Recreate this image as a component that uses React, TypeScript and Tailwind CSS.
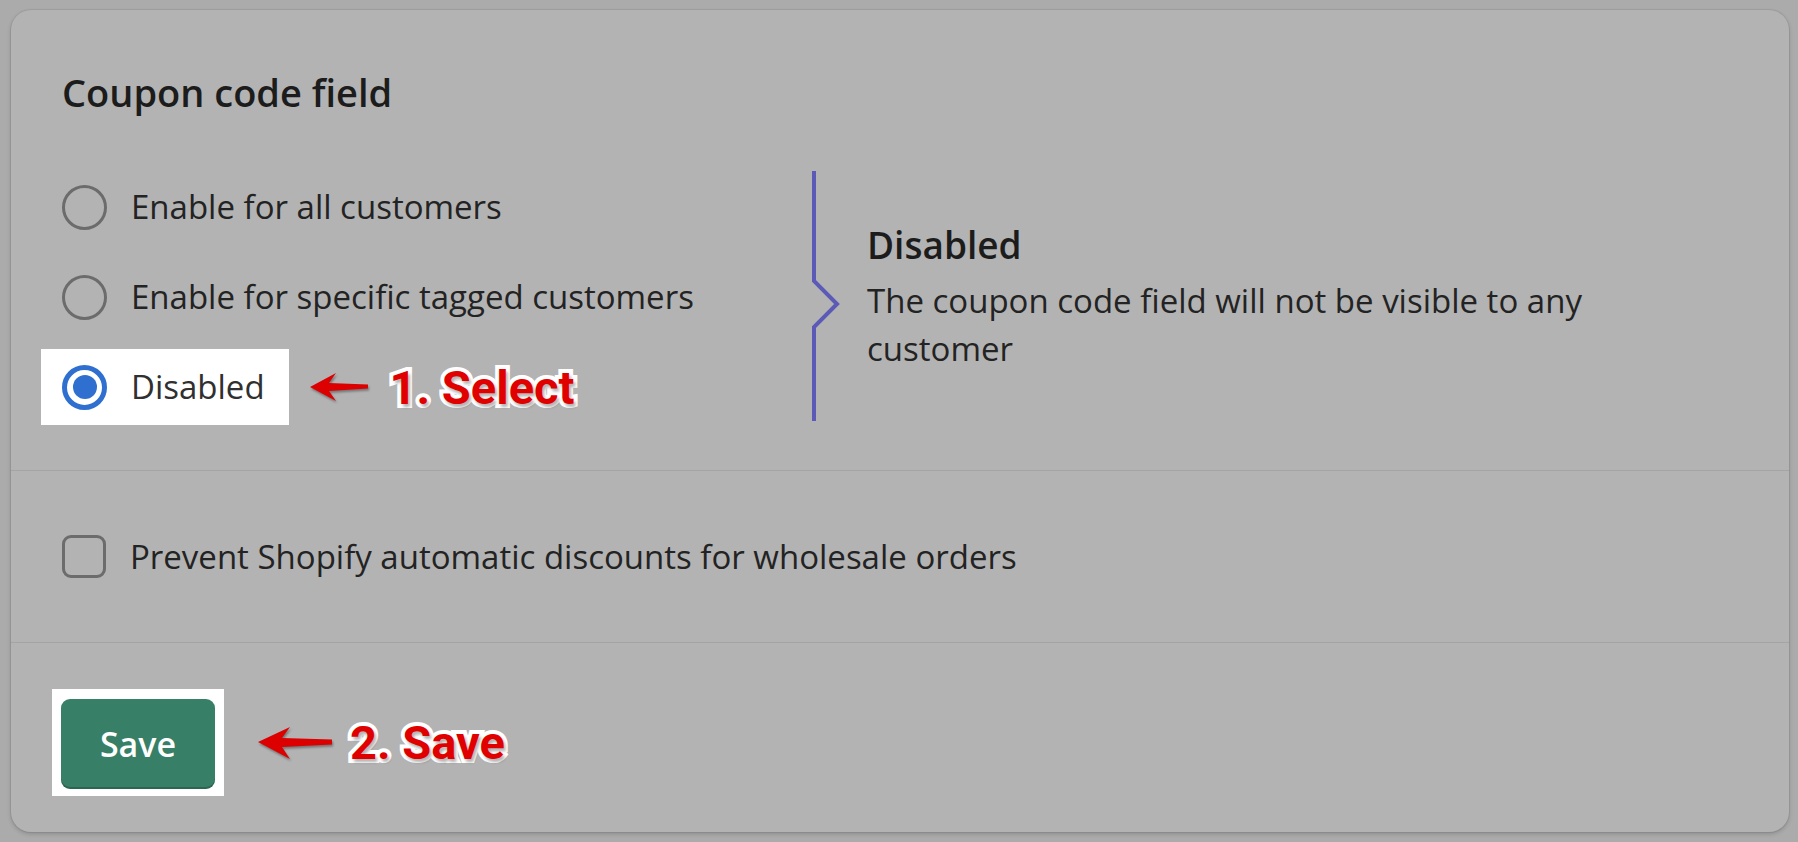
import React from "react";

const ui = { fontFamily: '"Open Sans", "Noto Sans", sans-serif' };
const callout = { fontFamily: 'Roboto, "Liberation Sans", sans-serif' };

function Radio({ checked }: { checked?: boolean }) {
  if (checked) {
    return (
      <span className="flex h-[45px] w-[45px] shrink-0 items-center justify-center rounded-full border-[5px] border-[#2f6fd0] bg-white">
        <span className="h-[24px] w-[24px] rounded-full bg-[#2f6fd0]" />
      </span>
    );
  }
  return <span className="h-[45px] w-[45px] shrink-0 rounded-full border-[3px] border-[#6c6c6c]" />;
}

function RedArrow({ w, h, d }: { w: number; h: number; d: string }) {
  return (
    <svg width={w} height={h} viewBox={`0 0 ${w} ${h}`} className="shrink-0 drop-shadow-[1px_2px_1px_rgba(0,0,0,0.35)]">
      <path d={d} fill="#dc0000" />
    </svg>
  );
}

function Callout({ children, size }: { children: React.ReactNode; size: string }) {
  return (
    <span
      style={callout}
      className={`${size} font-bold leading-none text-[#e10000] [-webkit-text-stroke:8px_white] [paint-order:stroke_fill] [text-shadow:2px_3px_3px_rgba(0,0,0,0.3)]`}
    >
      {children}
    </span>
  );
}

export default function App() {
  return (
    <div style={ui} className="min-h-screen bg-[#ababab] pt-[10px] pb-[9px] pl-[11px] pr-[9px]">
      <div className="flex flex-col rounded-[20px] bg-[#b3b3b3] shadow-[0_0_0_1px_rgba(0,0,0,0.06),0_2px_4px_rgba(0,0,0,0.18)]">
        {/* coupon options */}
        <div className="px-[51px] pt-[58px] pb-[38px]">
          <h2 className="text-[38px] font-semibold leading-[48px] text-[#1c1c1c]">Coupon code field</h2>

          <div className="mt-[46px] flex items-center">
            <div className="flex w-[748px] shrink-0 flex-col">
              <label className="flex h-[90px] items-center gap-[24px]">
                <Radio />
                <span className="text-[33px] text-[#232323]">Enable for all customers</span>
              </label>
              <label className="flex h-[90px] items-center gap-[24px]">
                <Radio />
                <span className="text-[33px] text-[#232323]">Enable for specific tagged customers</span>
              </label>
              <div className="flex h-[90px] items-center">
                <label className="-ml-[21px] flex h-[76px] items-center gap-[24px] bg-white pr-[24px] pl-[21px]">
                  <Radio checked />
                  <span className="text-[33px] text-[#303030]">Disabled</span>
                </label>
                <span className="ml-[21px]">
                  <RedArrow w={58} h={30} d="M0 15 L26 1 L19 11 L58 12.5 L58 16.5 L19 19 L26 29 Z" />
                </span>
                <span className="ml-[22px]">
                  <Callout size="text-[47px]">1. Select</Callout>
                </span>
              </div>
            </div>

            <div className="flex items-center">
              <svg width="30" height="252" viewBox="0 0 30 252" className="shrink-0">
                <path d="M4 0 V110 L27 133 L4 156 V250" fill="none" stroke="#5b5bb7" strokeWidth="4" />
              </svg>
              <div className="ml-[27px] w-[780px]">
                <div className="mb-[8px] text-[37px] font-semibold leading-[48px] text-[#1c1c1c]">Disabled</div>
                <p className="text-[33px] leading-[48px] text-[#232323]">
                  The coupon code field will not be visible to any customer
                </p>
              </div>
            </div>
          </div>
        </div>

        {/* automatic discounts */}
        <div className="flex h-[172px] items-center border-t border-[#a4a4a4] px-[51px]">
          <label className="flex items-center gap-[24px]">
            <span className="h-[43px] w-[44px] shrink-0 rounded-[9px] border-[3px] border-[#6c6c6c]" />
            <span className="text-[33px] text-[#232323]">Prevent Shopify automatic discounts for wholesale orders</span>
          </label>
        </div>

        {/* footer */}
        <div className="flex items-center border-t border-[#a4a4a4] pt-[46px] pb-[36px] pl-[41px]">
          <div className="bg-white pt-[10px] pb-[7px] pl-[9px] pr-[9px]">
            <button className="flex h-[90px] w-[154px] items-center justify-center rounded-[9px] bg-[#377f66] text-[34px] font-semibold text-white shadow-[inset_0_-2px_0_rgba(0,0,0,0.2)]">
              Save
            </button>
          </div>
          <span className="ml-[34px]">
            <RedArrow w={74} h={34} d="M0 16 L32 1 L24 12 L74 13.5 L74 18.5 L24 21 L32 33 Z" />
          </span>
          <span className="ml-[18px]">
            <Callout size="text-[47px]">2. Save</Callout>
          </span>
        </div>
      </div>
    </div>
  );
}
